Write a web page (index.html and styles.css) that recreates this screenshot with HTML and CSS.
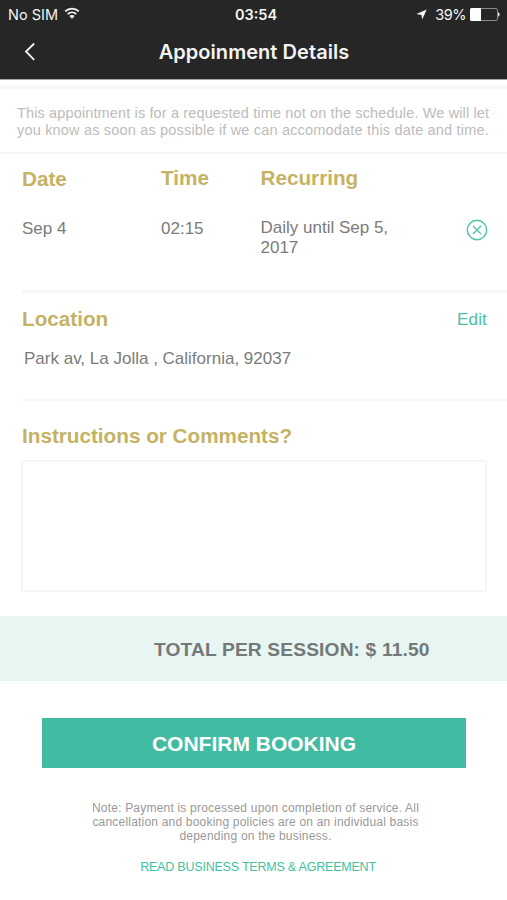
FILE: index.html
```html
<!DOCTYPE html>
<html lang="en">
<head>
<meta charset="utf-8">
<title>Appoinment Details</title>
<link rel="stylesheet" href="styles.css">
</head>
<body>
<header class="header">
  <div class="status">
    <div class="status-left"><span class="carrier">No SIM</span>
      <svg class="wifi" width="16" height="12" viewBox="0 0 16 12" fill="none" stroke="#f4f4f4" stroke-width="1.8"><path d="M1.200 4.400C5 .6 11 .6 14.800 4.400M3.700 7.100c2.500-2.400 6.100-2.400 8.600 0"/><path d="M5.300 9.100c1.600-1.500 3.800-1.500 5.400 0L8 11.800z" fill="#f4f4f4" stroke="none"/></svg>
    </div>
    <span class="clock">03:54</span>
    <div class="status-right">
      <svg class="arrow" width="11" height="11" viewBox="0 0 11 11" fill="#f4f4f4"><path d="M10.700.4 6.200 10.600 5.500 5.900.4 5.100z"/></svg>
      <span class="percent">39%</span>
      <svg class="battery" width="30" height="13" viewBox="0 0 30 13"><rect x=".5" y=".5" width="27" height="12" rx="1.500" fill="none" stroke="#8b8b8b"/><path d="M1.500 0H11v13H1.500A1.500 1.500 0 0 1 0 11.500V1.500A1.500 1.500 0 0 1 1.500 0z" fill="#fff"/><path d="M28 4.300c2.200.6 2.200 3.800 0 4.400z" fill="#ddd"/></svg>
    </div>
  </div>
  <div class="titlebar">
    <svg class="back" width="12" height="20" viewBox="0 0 12 20" fill="none" stroke="#f4f4f4" stroke-width="1.800"><path d="M10.200 1.500 2 9.500l8.200 8.300"/></svg>
    <h1 class="title">Appoinment Details</h1>
  </div>
</header>
<main>
  <p class="notice"><span class="n1">This appointment is for a requested time not on the schedule. We will let</span><br><span class="n2">you know as soon as possible if we can accomodate this date and time.</span></p>
  <section class="schedule">
    <div class="col"><h2 class="date-head">Date</h2><p>Sep 4</p></div>
    <div class="col"><h2>Time</h2><p>02:15</p></div>
    <div class="col recurring"><h2>Recurring</h2><p>Daily until Sep 5,<br>2017</p></div>
    <svg class="remove" width="22" height="22" viewBox="0 0 22 22" fill="none" stroke="#4cc5a6" stroke-width="1.400"><circle cx="11" cy="11" r="9.700"/><path d="m7 7 8 8m0-8-8 8"/></svg>
  </section>
  <section class="location">
    <div class="row"><h2>Location</h2><a class="edit">Edit</a></div>
    <p>Park av, La Jolla , California, 92037</p>
  </section>
  <section class="comments">
    <h2>Instructions or Comments?</h2>
    <div class="box"></div>
  </section>
  <div class="total"><span>TOTAL PER SESSION: $ 11.50</span></div>
  <div class="confirm"><span>CONFIRM BOOKING</span></div>
  <p class="note">Note: Payment is processed upon completion of service. All<br>cancellation and booking policies are on an individual basis<br>depending on the business.</p>
  <div class="terms"><span>READ BUSINESS TERMS &amp; AGREEMENT</span></div>
</main>
</body>
</html>
```
FILE: styles.css
```css
* { box-sizing: border-box; }
body { margin: 0; width: 507px; height: 900px; overflow: hidden; background: #fff; color: #7b7b7b; font-family: "Liberation Sans", sans-serif; }
h1, h2, p { margin: 0; }
svg { display: block; flex: none; }
.header { height: 80px; background: #262626; color: #f4f4f4; border-bottom: 1px solid #aaa; font-family: Inter, sans-serif; }
.status { height: 28px; display: grid; grid-template-columns: 1fr auto 1fr; align-items: center; padding: 0 7px 0 8px; font-size: 15px; }
.status-left, .status-right { display: flex; align-items: center; }
.status-right { justify-content: flex-end; }
.carrier { font-size: 14.5px; }
.wifi { margin: -2px 0 0 6px; }
.clock { font-size: 14.5px; font-weight: 600; padding-left: 4px; }
.arrow { margin-right: 8px; }
.percent { font-size: 14.5px; letter-spacing: -.5px; }
.battery { margin-left: 4px; }
.titlebar { height: 51px; display: grid; grid-template-columns: 24px 1fr 24px; align-items: center; padding: 0 24px 4px; }
.title { font-size: 20px; line-height: 24px; font-weight: 600; text-align: center; padding: 1px 0 0 1px; letter-spacing: .05px; }
.notice { margin-top: 5px; height: 69px; border-top: 4px solid #f7f7f7; border-bottom: 2px solid #f6f6f6; padding: 16px 0 0 17px; font-size: 14.5px; line-height: 16.5px; color: #bcbcbc; white-space: nowrap; }
.n1 { letter-spacing: .135px; }
.n2 { letter-spacing: .18px; }
h2 { font-size: 20.7px; line-height: 24px; font-weight: bold; color: #c5b263; }
.schedule { height: 136px; display: grid; grid-template-columns: 139px 99.5px 205px 22px; padding: 12px 0 0 22px; font-size: 17px; line-height: 19.5px; }
.schedule p { margin-top: 29px; }
.schedule .date-head { padding-top: 1px; height: 24px; }
.schedule .recurring p { margin-top: 28px; }
.remove { margin-top: 53px; }
.location { margin-left: 22px; height: 111px; border-top: 3px solid #f8f8f8; border-bottom: 2px solid #f7f7f7; padding-top: 14px; }
.row { display: flex; justify-content: space-between; align-items: center; padding-right: 20px; }
.edit { font-size: 17px; line-height: 20px; color: #47c2a1; padding-top: 2px; letter-spacing: .15px; }
.location p { font-size: 17px; line-height: 20px; margin: 18px 0 0 2px; }
.comments { padding: 23px 20px 0 21px; height: 215px; }
.comments h2 { padding-left: 1px; }
.box { margin-top: 12px; height: 132px; border: 2px solid #f6f6f6; border-radius: 3px; }
.total { height: 65px; background: #e7f6f2; color: #747978; font-size: 19.2px; letter-spacing: .14px; font-weight: bold; display: flex; align-items: center; padding: 2px 0 0 154px; }
.confirm { margin: 37px 41px 0 42px; height: 50px; background: #41bca3; color: #fff; font-size: 21px; font-weight: bold; display: flex; align-items: center; justify-content: center; padding-top: 1px; }
.note { margin: 33px 0 0 4px; text-align: center; font-size: 12px; letter-spacing: .2px; line-height: 14px; color: #999; white-space: nowrap; }
.terms { margin: 16px 0 0 9px; text-align: center; font-size: 12.5px; letter-spacing: -.21px; line-height: 16px; color: #41c2a1; }
```
